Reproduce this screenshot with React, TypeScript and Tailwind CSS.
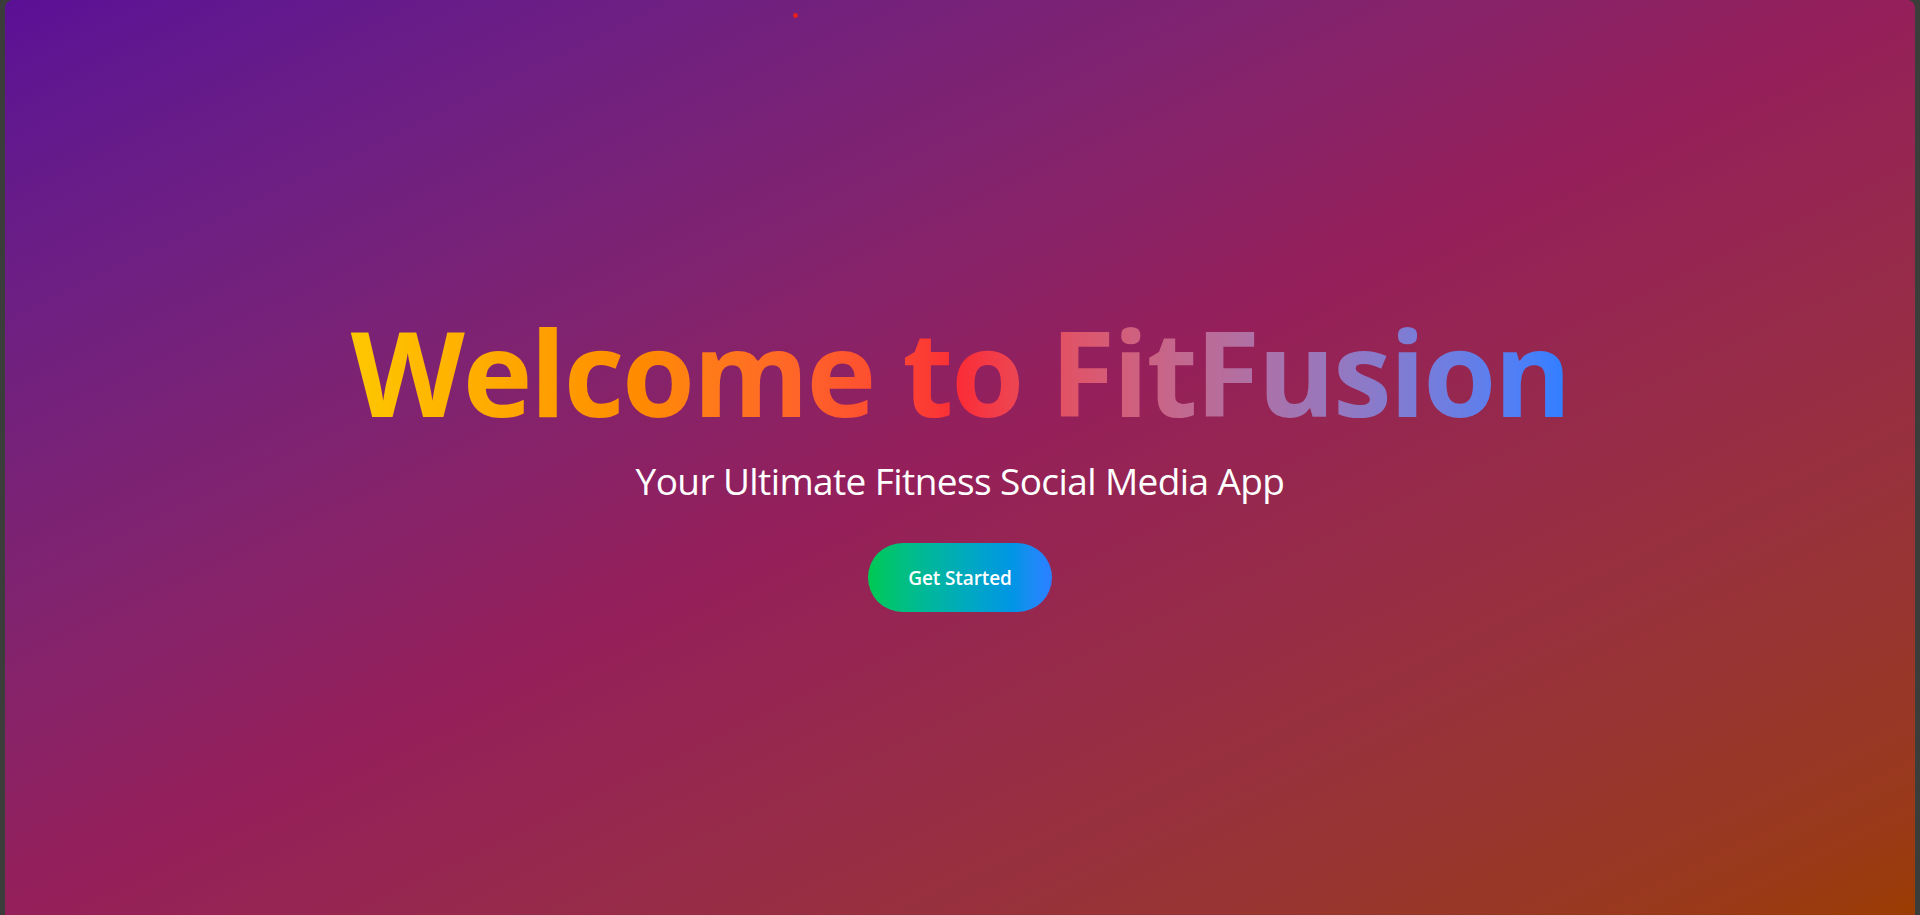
import React from "react";

export default function App() {
  return (
    <div className="min-h-screen bg-[#3b3d3b] px-[5px]">
      <div className="relative flex min-h-[915px] flex-col items-center justify-center rounded-t-lg bg-linear-to-br from-[#5b0f96] via-[#951f5a] to-[#9a3c00] pt-[10px]">
        <span className="absolute left-[788px] top-[13px] h-[5px] w-[5px] rounded-full bg-[#e3201f]" />
        <h1 className="w-fit bg-linear-to-r from-yellow-400 via-red-500 to-blue-500 bg-clip-text font-['Open_Sans',sans-serif] text-[118px] font-bold leading-none tracking-[-2.3px] text-transparent">
          Welcome to FitFusion
        </h1>
        <p className="mt-[22px] font-['Open_Sans',sans-serif] text-[37px] leading-[55.5px] tracking-[-0.6px] text-white">
          Your Ultimate Fitness Social Media App
        </p>
        <button className="mt-[34px] rounded-full bg-linear-to-r from-green-500 to-blue-500 px-10 pt-[21px] pb-[20px] font-['Open_Sans',sans-serif] text-[19px] font-semibold leading-7 tracking-[-0.1px] text-white">
          Get Started
        </button>
      </div>
    </div>
  );
}
